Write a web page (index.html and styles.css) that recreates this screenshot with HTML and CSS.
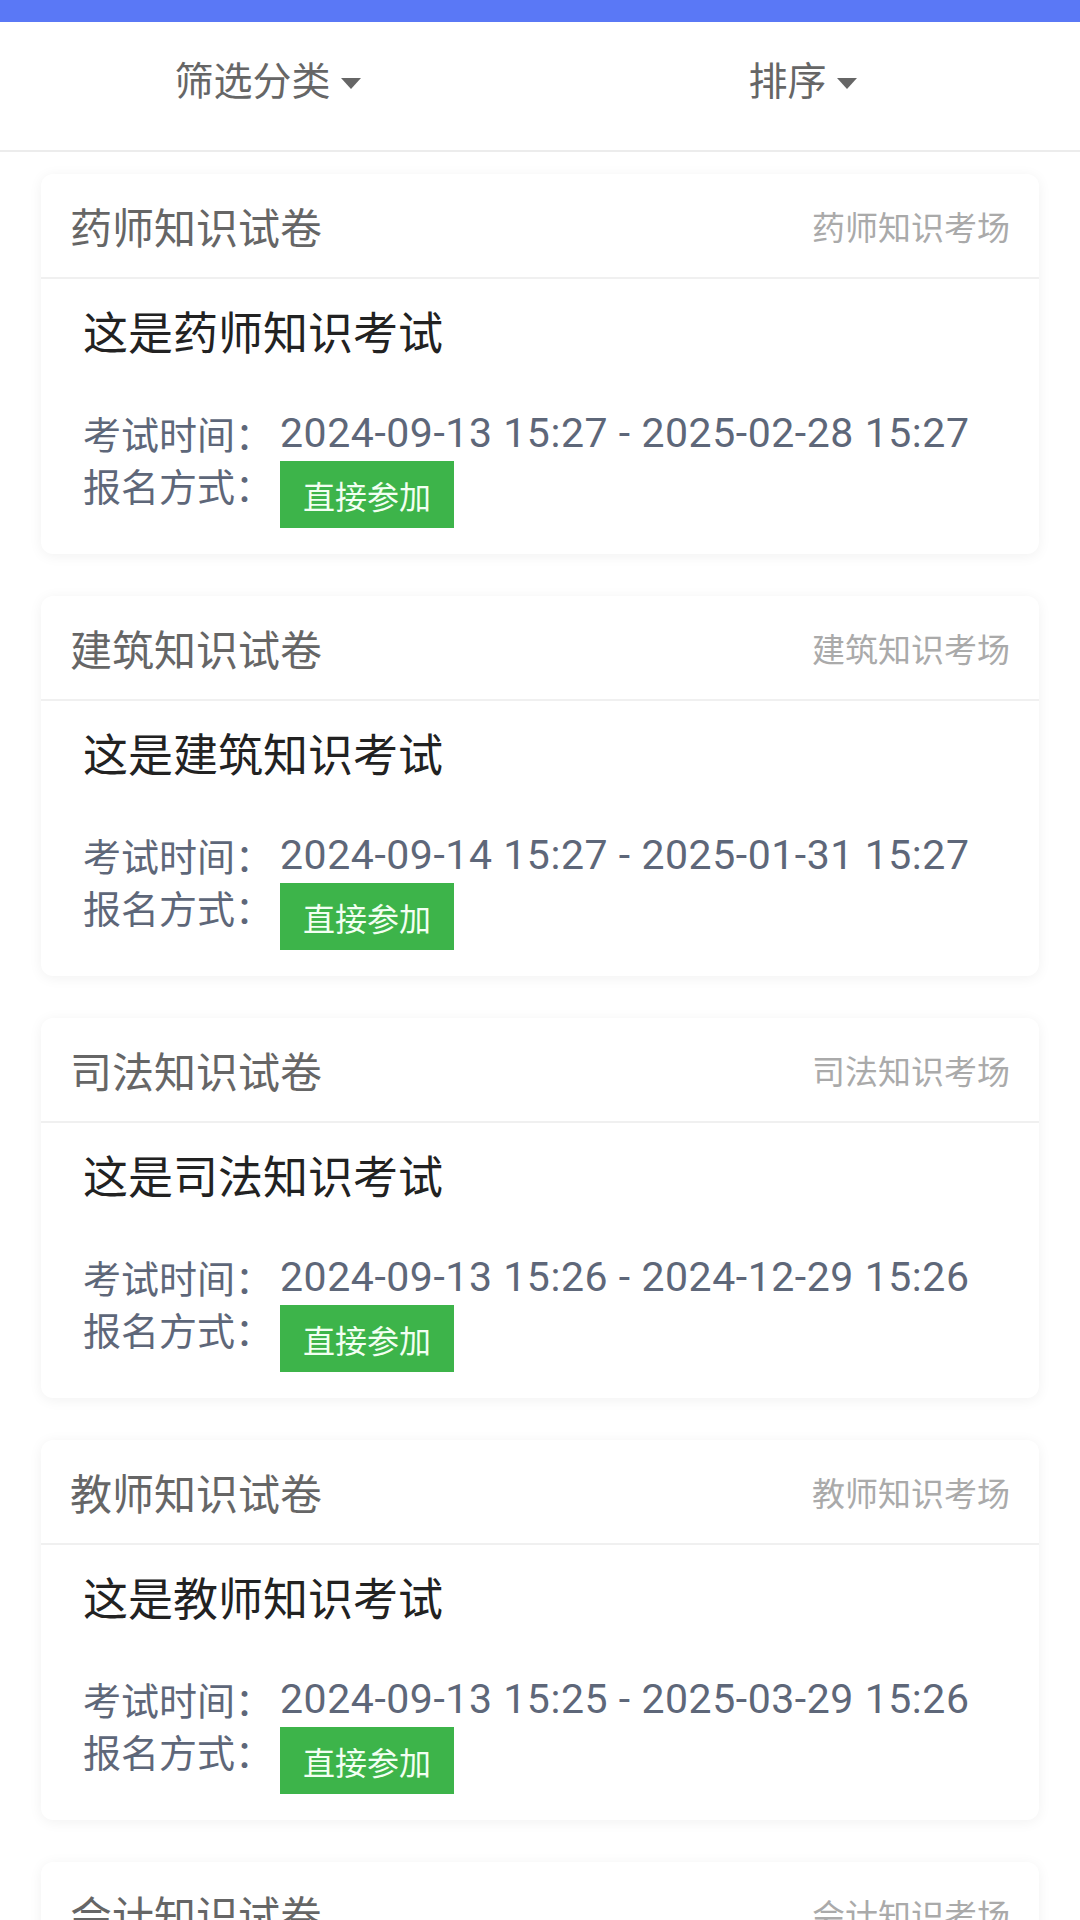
FILE: index.html
```html
<!DOCTYPE html>
<html lang="zh-CN">
<head>
<meta charset="utf-8">
<title>考试列表</title>
<link rel="stylesheet" href="styles.css">
</head>
<body>
<div class="topbar"></div>
<div class="filterbar">
  <div class="filter-item"><span>筛选分类</span><i class="caret"></i></div>
  <div class="filter-item"><span>排序</span><i class="caret"></i></div>
</div>
<div class="list">
  <div class="card">
    <div class="card-head"><span class="card-title">药师知识试卷</span><span class="card-sub">药师知识考场</span></div>
    <div class="card-body">
      <div class="exam-name">这是药师知识考试</div>
      <div class="row"><span class="label">考试时间：</span><span class="date">2024-09-13 15:27 - 2025-02-28 15:27</span></div>
      <div class="row row-enroll"><span class="label">报名方式：</span><span class="btn">直接参加</span></div>
    </div>
  </div>
  <div class="card">
    <div class="card-head"><span class="card-title">建筑知识试卷</span><span class="card-sub">建筑知识考场</span></div>
    <div class="card-body">
      <div class="exam-name">这是建筑知识考试</div>
      <div class="row"><span class="label">考试时间：</span><span class="date">2024-09-14 15:27 - 2025-01-31 15:27</span></div>
      <div class="row row-enroll"><span class="label">报名方式：</span><span class="btn">直接参加</span></div>
    </div>
  </div>
  <div class="card">
    <div class="card-head"><span class="card-title">司法知识试卷</span><span class="card-sub">司法知识考场</span></div>
    <div class="card-body">
      <div class="exam-name">这是司法知识考试</div>
      <div class="row"><span class="label">考试时间：</span><span class="date">2024-09-13 15:26 - 2024-12-29 15:26</span></div>
      <div class="row row-enroll"><span class="label">报名方式：</span><span class="btn">直接参加</span></div>
    </div>
  </div>
  <div class="card">
    <div class="card-head"><span class="card-title">教师知识试卷</span><span class="card-sub">教师知识考场</span></div>
    <div class="card-body">
      <div class="exam-name">这是教师知识考试</div>
      <div class="row"><span class="label">考试时间：</span><span class="date">2024-09-13 15:25 - 2025-03-29 15:26</span></div>
      <div class="row row-enroll"><span class="label">报名方式：</span><span class="btn">直接参加</span></div>
    </div>
  </div>
  <div class="card">
    <div class="card-head"><span class="card-title">会计知识试卷</span><span class="card-sub">会计知识考场</span></div>
  </div>
</div>
</body>
</html>
```
FILE: styles.css
```css
html, body {
  margin: 0;
  padding: 0;
  background: #ffffff;
  font-family: "Noto Sans CJK SC", "Noto Sans", sans-serif;
}
body {
  height: 1920px;
  overflow: hidden;
}
.topbar {
  height: 22px;
  background: #5a78f6;
}
.filterbar {
  display: flex;
  height: 130px;
  box-sizing: border-box;
  padding: 0 10px 16px 0;
  align-items: center;
  border-bottom: 2px solid #ececec;
  background: #fff;
}
.filter-item {
  flex: 1;
  display: flex;
  align-items: center;
  justify-content: center;
  gap: 10px;
  color: #666;
  font-size: 39px;
  line-height: 56px;
}
.caret {
  width: 0;
  height: 0;
  border-left: 10px solid transparent;
  border-right: 10px solid transparent;
  border-top: 11px solid #666;
  margin-top: 10px;
}
.list {
  display: flex;
  flex-direction: column;
  gap: 42px;
  padding: 22px 41px 0;
}
.card {
  background: #fff;
  border-radius: 12px;
  box-shadow: 0 2px 14px rgba(0, 0, 0, 0.06);
  flex-shrink: 0;
}
.card-head {
  height: 103px;
  display: flex;
  align-items: center;
  justify-content: space-between;
  padding: 0 29px 0 29px;
  border-bottom: 2px solid #f0f0f0;
}
.card-title {
  font-size: 42px;
  color: #666;
}
.card-sub {
  font-size: 33px;
  color: #aaa;
}
.card-body {
  padding: 20px 42px 26px;
}
.exam-name {
  font-size: 45px;
  line-height: 64px;
  color: #222;
}
.row {
  display: flex;
  align-items: center;
  color: #5e6779;
}
.exam-name + .row {
  margin-top: 42px;
  height: 56px;
}
.label {
  font-size: 38px;
  line-height: 48px;
}
.date {
  font-family: Roboto, "Noto Sans", sans-serif;
  font-size: 41px;
  letter-spacing: 0.55px;
  margin-left: 7px;
  line-height: 56px;
}
.row-enroll {
  align-items: flex-start;
}
.btn {
  margin-left: 7px;
  width: 174px;
  height: 67px;
  background: #3db44a;
  color: #f2fff2;
  font-size: 32px;
  display: flex;
  align-items: center;
  justify-content: center;
}
```
